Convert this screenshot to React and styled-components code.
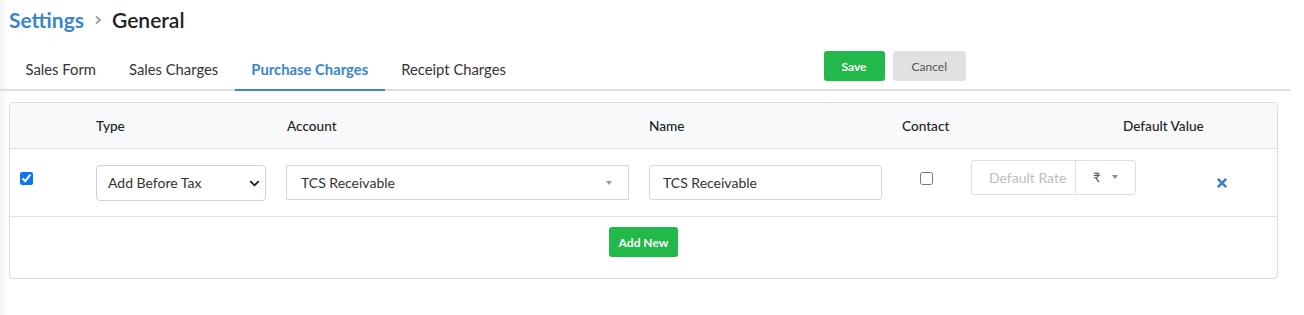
import React, { useState } from 'react'
import styled, { createGlobalStyle } from 'styled-components'
import { ChevronDown } from 'lucide-react'
import { FaTimes } from 'react-icons/fa'

const GlobalStyle = createGlobalStyle`
  body {
    margin: 0;
    background: #fff;
    font-family: Lato, "Open Sans", Arial, sans-serif;
    color: #333;
  }
`

const Page = styled.div`
  width: 1290px;
  min-height: 315px;
  box-shadow: inset 9px 0 8px -7px rgba(0, 0, 0, 0.08);
`

const Breadcrumb = styled.div`
  display: flex;
  align-items: center;
  gap: 10px;
  padding: 8px 0 0 9px;
  height: 24px;
  line-height: 24px;
`

const Crumb = styled.span`
  font-size: 21px;
  font-weight: ${p => (p.$link ? 700 : 600)};
  color: ${p => (p.$link ? '#3b86c9' : '#222')};
`

const TabBar = styled.div`
  display: flex;
  align-items: flex-start;
  margin-top: 17px;
  padding-left: 9px;
  border-bottom: 2px solid #dedede;
`

const Tab = styled.div`
  padding: 10px 16.5px 10px;
  font-size: 14.8px;
  line-height: 20px;
  font-weight: ${p => (p.$active ? 700 : 400)};
  color: ${p => (p.$active ? '#3a87c8' : '#333')};
  border-bottom: 2px solid ${p => (p.$active ? '#3a87c8' : 'transparent')};
  margin-bottom: -2px;
  cursor: pointer;
`

const Actions = styled.div`
  display: flex;
  gap: 8px;
  margin: 2px 324px 0 auto;
`

const Button = styled.button`
  height: 30px;
  padding: 0 ${p => p.$pad || 18}px;
  border: none;
  border-radius: 3px;
  font-family: inherit;
  font-size: 12px;
  font-weight: ${p => (p.$variant === 'green' ? 700 : 400)};
  background: ${p => (p.$variant === 'green' ? '#22b84a' : '#e0e1e3')};
  color: ${p => (p.$variant === 'green' ? '#fff' : '#555')};
  cursor: pointer;
`

const Card = styled.div`
  margin: 11px 12px 0 9px;
  border: 1px solid #dcdcdc;
  border-radius: 4px;
  overflow: hidden;
`

const Row = styled.div`
  display: grid;
  grid-template-columns: 76px 190px 363px 253px 69px 185px 1fr;
  align-items: center;
  height: ${p => p.$h}px;
  background: ${p => p.$bg || '#fff'};
  border-bottom: 1px solid #e2e2e2;
`

const HeadCell = styled.div`
  padding-left: ${p => p.$pl || 10}px;
  grid-column: ${p => p.$span || 'auto'};
  font-size: 13.6px;
  font-weight: 500;
  color: #222;
`

const Cell = styled.div`
  padding: 0 10px;
  display: flex;
  justify-content: ${p => (p.$center ? 'center' : 'flex-start')};
  align-items: center;
`

const Check = styled.input`
  width: 13px;
  height: 13px;
  margin: 0 0 8px 0;
  accent-color: #0b75f0;
`

const SelectWrap = styled.div`
  position: relative;
  width: 100%;
`

const NativeSelect = styled.select`
  appearance: none;
  width: 100%;
  height: 36px;
  padding: 0 30px 0 11px;
  border: 1px solid #d0d0d0;
  border-radius: 4px;
  background: #fff;
  font-family: inherit;
  font-size: 14px;
  color: #333;
`

const SelectArrow = styled(ChevronDown)`
  position: absolute;
  right: 4px;
  top: 11px;
  pointer-events: none;
`

const Combo = styled.div`
  display: flex;
  align-items: center;
  justify-content: space-between;
  width: 100%;
  height: 35px;
  box-sizing: border-box;
  padding: 0 16px 0 14px;
  border: 1px solid #d6d6d6;
  font-size: 14px;
  color: #333;
`

const Caret = styled.span`
  width: 0;
  height: 0;
  border-left: 3.5px solid transparent;
  border-right: 3.5px solid transparent;
  border-top: 4px solid ${p => p.$color || '#999'};
`

const TextInput = styled.input`
  width: 100%;
  height: 35px;
  box-sizing: border-box;
  padding: 0 13px;
  border: 1px solid #d6d6d6;
  border-radius: 3px;
  font-family: inherit;
  font-size: 14px;
  color: #333;
  outline: none;
`

const Group = styled.div`
  display: flex;
  width: 165px;
  height: 35px;
  box-sizing: border-box;
  margin-bottom: 11px;
  border: 1px solid #dedede;
  border-radius: 3px;
`

const GroupInput = styled.input`
  width: 104px;
  box-sizing: border-box;
  border: none;
  border-right: 1px solid #dedede;
  padding: 0 0 0 17px;
  font-family: inherit;
  font-size: 14px;
  outline: none;
  background: transparent;
  &::placeholder {
    color: #bcbcbc;
  }
`

const Currency = styled.div`
  flex: 1;
  display: flex;
  align-items: center;
  gap: 11px;
  padding-left: 17px;
  font-size: 13px;
  color: #555;
`

const Remove = styled.div`
  padding-left: 69px;
  color: #3c7fc4;
  display: flex;
  align-items: center;
`

const Footer = styled.div`
  display: flex;
  justify-content: center;
  align-items: flex-start;
  height: 61px;
  padding-top: 10px;
  box-sizing: border-box;
`

const Chevron = () => (
  <svg width="8" height="10" viewBox="0 0 8 10">
    <polyline points="2,1.5 6,5 2,8.5" fill="none" stroke="#a5a5a5" strokeWidth="2.2" />
  </svg>
)

const tabs = ['Sales Form', 'Sales Charges', 'Purchase Charges', 'Receipt Charges']

export default function App () {
  const [active, setActive] = useState('Purchase Charges')

  return (
    <Page>
      <GlobalStyle />
      <Breadcrumb>
        <Crumb $link>Settings</Crumb>
        <Chevron />
        <Crumb>General</Crumb>
      </Breadcrumb>

      <TabBar>
        {tabs.map(t => (
          <Tab key={t} $active={t === active} onClick={() => setActive(t)}>{t}</Tab>
        ))}
        <Actions>
          <Button $variant='green' $pad={18}>Save</Button>
          <Button $pad={19}>Cancel</Button>
        </Actions>
      </TabBar>

      <Card>
        <Row $h={45} $bg='#f8f9fa'>
          <HeadCell />
          <HeadCell>Type</HeadCell>
          <HeadCell $pl={11}>Account</HeadCell>
          <HeadCell>Name</HeadCell>
          <HeadCell>Contact</HeadCell>
          <HeadCell $span='6 / 8' $pl={162}>Default Value</HeadCell>
        </Row>

        <Row $h={67}>
          <Cell><Check type='checkbox' defaultChecked /></Cell>
          <Cell>
            <SelectWrap>
              <NativeSelect defaultValue='before'>
                <option value='before'>Add Before Tax</option>
                <option value='after'>Add After Tax</option>
              </NativeSelect>
              <SelectArrow size={15} strokeWidth={3} color='#222' />
            </SelectWrap>
          </Cell>
          <Cell>
            <Combo>
              <span>TCS Receivable</span>
              <Caret />
            </Combo>
          </Cell>
          <Cell><TextInput defaultValue='TCS Receivable' /></Cell>
          <Cell $center><Check type='checkbox' /></Cell>
          <Cell>
            <Group>
              <GroupInput placeholder='Default Rate' />
              <Currency>₹ <Caret $color='#888' /></Currency>
            </Group>
          </Cell>
          <Remove><FaTimes size={14} /></Remove>
        </Row>

        <Footer>
          <Button $variant='green' $pad={10}>Add New</Button>
        </Footer>
      </Card>
    </Page>
  )
}
